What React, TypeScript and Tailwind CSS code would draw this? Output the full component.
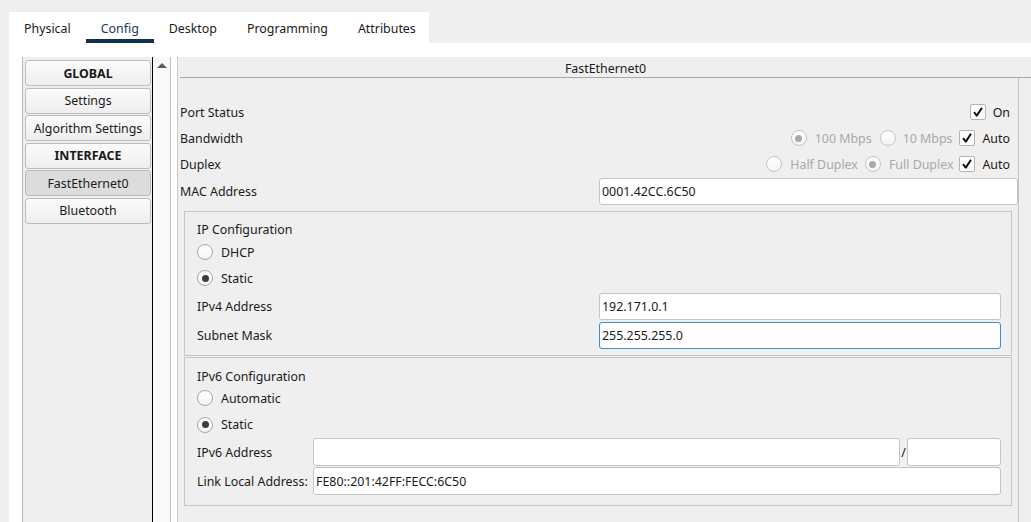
import React from "react";

const tabs = ["Physical", "Config", "Desktop", "Programming", "Attributes"];

const sideItems = [
  { label: "GLOBAL", bold: true },
  { label: "Settings" },
  { label: "Algorithm Settings" },
  { label: "INTERFACE", bold: true },
  { label: "FastEthernet0", active: true },
  { label: "Bluetooth" },
];

function Check() {
  return (
    <span className="w-[16px] h-[16px] shrink-0 bg-white border border-[#b4b4b4] rounded-[2px] flex items-center justify-center">
      <svg width="12" height="12" viewBox="0 0 12 12">
        <path d="M2 6.2 L4.8 9.6 L10 1.8" fill="none" stroke="#111" strokeWidth="2" strokeLinejoin="round" />
      </svg>
    </span>
  );
}

function Radio({ checked, disabled }: { checked?: boolean; disabled?: boolean }) {
  return (
    <span
      className={`w-[16px] h-[16px] shrink-0 rounded-full border flex items-center justify-center bg-gradient-to-b from-white to-[#f4f4f4] ${
        disabled ? "border-[#c4c4c4]" : "border-[#a6a6a6]"
      }`}
    >
      {checked && (
        <span className={`w-[7px] h-[7px] rounded-full ${disabled ? "bg-[#a9a9a9]" : "bg-[#3c3c3c]"}`} />
      )}
    </span>
  );
}

function Field({ value, w, focus }: { value?: string; w: string; focus?: boolean }) {
  return (
    <div
      className={`${w} h-full bg-white rounded-[3px] border flex items-center pl-[2px] pt-[2px] text-[#1a1a1a] ${
        focus ? "border-[#3d8ec9]" : "border-[#c4c4c4]"
      }`}
    >
      {value}
    </div>
  );
}

function GroupRadio({ label, checked, h = "h-[26px]" }: { label: string; checked?: boolean; h?: string }) {
  return (
    <div className={`${h} flex items-center gap-[8px]`}>
      <Radio checked={checked} />
      <span className="pt-[2px]">{label}</span>
    </div>
  );
}

export default function App() {
  return (
    <div className="w-[1031px] h-[522px] overflow-hidden bg-[#efefef] pt-[12px] pl-[9px] flex flex-col font-['Noto_Sans',sans-serif] text-[12.4px] text-[#1a1a1a]">
      {/* Tabs */}
      <div className="w-[420px] h-[31px] bg-white flex shrink-0">
        {tabs.map((t) => (
          <div key={t} className="relative px-[15px] flex items-center pt-[3px]">
            <span className={t === "Config" ? "text-[#1d3a5c]" : ""}>{t}</span>
            {t === "Config" && <span className="absolute left-0 right-0 bottom-0 h-[4px] bg-[#10304f]" />}
          </div>
        ))}
      </div>

      {/* Body */}
      <div className="flex-1 bg-white pt-[14px] pl-[13px] flex min-h-0">
        {/* Side list */}
        <div className="w-[131px] shrink-0 border-l border-[#b9b9b9] border-r border-r-black bg-[#efefef] pt-[3px] pl-[2px] pr-[1px] flex flex-col gap-[1.5px]">
          {sideItems.map((s) => (
            <div
              key={s.label}
              className={`h-[26px] shrink-0 rounded-[3px] border border-[#bcbcbc] flex items-center justify-center pt-[2px] ${
                s.active ? "bg-[#dcdcdc]" : "bg-gradient-to-b from-[#fbfbfb] to-[#eeeeee]"
              } ${s.bold ? "font-bold" : ""}`}
            >
              {s.label}
            </div>
          ))}
        </div>

        {/* Scrollbar */}
        <div className="w-[18px] shrink-0 bg-[#f9f9f9] border-r border-[#c2c2c2] flex justify-center pt-[6px]">
          <svg width="10" height="5" viewBox="0 0 10 5">
            <path d="M0 5 L5 0 L10 5 Z" fill="#5c5c5c" />
          </svg>
        </div>
        <div className="w-[6px] shrink-0 bg-white" />

        {/* Main panel */}
        <div className="flex-1 min-w-0 bg-[#efefef] border-l border-[#c8c8c8] flex flex-col">
          <div className="h-[21px] ml-[2px] shrink-0 border-b border-[#a8a8a8] flex items-center justify-center pt-[4px]">
            FastEthernet0
          </div>
          <div className="flex-1 w-[841px] border-r border-[#c2c2c2] flex flex-col">
            <div className="h-[21px] shrink-0" />
            <div className="h-[26px] pl-[2px] pr-[8px] flex items-center">
              <span className="flex-1 pt-[2px]">Port Status</span>
              <Check />
              <span className="ml-[7px] pt-[2px]">On</span>
            </div>
            <div className="h-[26px] pl-[2px] pr-[8px] flex items-center">
              <span className="flex-1 pt-[2px]">Bandwidth</span>
              <Radio checked disabled />
              <span className="ml-[8px] pt-[2px] text-[#a9a9a9]">100 Mbps</span>
              <span className="ml-[8px]">
                <Radio disabled />
              </span>
              <span className="ml-[7px] pt-[2px] text-[#a9a9a9]">10 Mbps</span>
              <span className="ml-[7px]">
                <Check />
              </span>
              <span className="ml-[7px] pt-[2px]">Auto</span>
            </div>
            <div className="h-[26px] pl-[2px] pr-[8px] flex items-center">
              <span className="flex-1 pt-[2px]">Duplex</span>
              <Radio disabled />
              <span className="ml-[8px] pt-[2px] text-[#a9a9a9]">Half Duplex</span>
              <span className="ml-[7px]">
                <Radio checked disabled />
              </span>
              <span className="ml-[8px] pt-[2px] text-[#a9a9a9]">Full Duplex</span>
              <span className="ml-[6px]">
                <Check />
              </span>
              <span className="ml-[7px] pt-[2px]">Auto</span>
            </div>
            <div className="h-[27px] mt-[1px] pl-[2px] flex items-center">
              <span className="flex-1 pt-[2px]">MAC Address</span>
              <Field w="w-[419px]" value="0001.42CC.6C50" />
            </div>

            {/* IPv4 group */}
            <div className="mt-[6px] mx-[6px] border border-[#c6c6c6] pt-[8px] pb-[6px] pl-[12px] pr-[10px] flex flex-col">
              <div className="h-[19px] flex items-center pt-[2px]">IP Configuration</div>
              <GroupRadio label="DHCP" />
              <GroupRadio label="Static" checked />
              <div className="h-[27px] mt-[2px] flex items-center">
                <span className="flex-1 pt-[2px]">IPv4 Address</span>
                <Field w="w-[402px]" value="192.171.0.1" />
              </div>
              <div className="h-[27px] mt-[2px] flex items-center">
                <span className="flex-1 pt-[2px]">Subnet Mask</span>
                <Field w="w-[402px]" value="255.255.255.0" focus />
              </div>
            </div>

            {/* IPv6 group */}
            <div className="mt-[1px] mx-[6px] border border-[#c6c6c6] pt-[9px] pb-[10px] pl-[12px] pr-[10px] flex flex-col">
              <div className="h-[18px] flex items-center pt-[2px]">IPv6 Configuration</div>
              <GroupRadio label="Automatic" />
              <GroupRadio label="Static" checked h="h-[27px]" />
              <div className="h-[28px] flex items-center">
                <span className="flex-1 pt-[2px]">IPv6 Address</span>
                <Field w="w-[587px]" />
                <span className="w-[7px] text-center pt-[2px]">/</span>
                <Field w="w-[94px]" />
              </div>
              <div className="h-[28px] mt-[1px] flex items-center">
                <span className="flex-1 pt-[2px]">Link Local Address:</span>
                <Field w="w-[688px]" value="FE80::201:42FF:FECC:6C50" />
              </div>
            </div>
          </div>
        </div>
      </div>
    </div>
  );
}
